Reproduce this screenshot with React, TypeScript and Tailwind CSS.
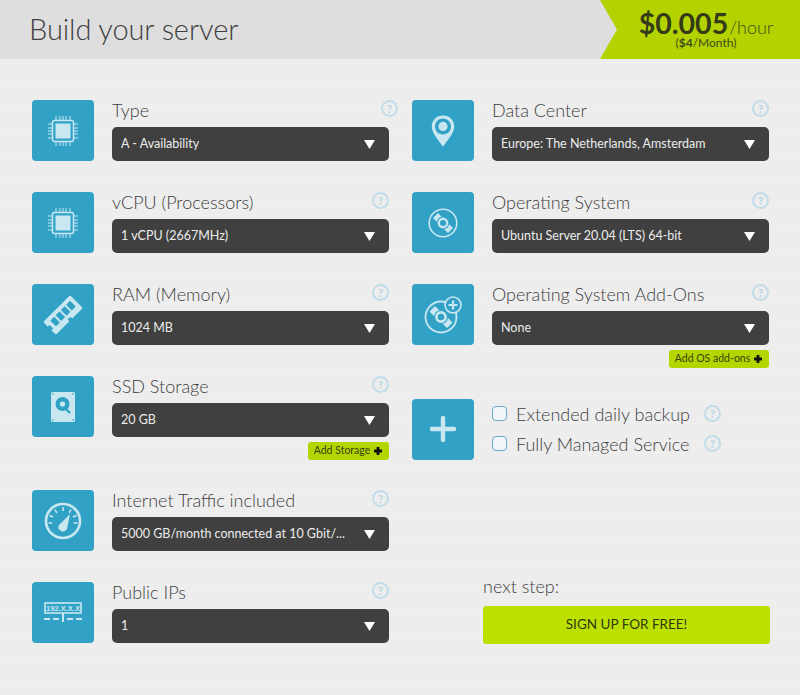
import type { ReactNode } from 'react'

const ink = '#c9e7f1'
const teal = '#31a2c6'

const ChipIcon = () => (
  <svg width="32" height="32" viewBox="0 0 32 32" fill="none" stroke={ink}>
    <rect x="5.5" y="5.5" width="21" height="21" rx="2" strokeWidth="1.5" />
    <rect x="8.5" y="8.5" width="15" height="15" fill={ink} stroke="none" />
    <path
      d="M9 1v4M13 1v4M16 1v4M19 1v4M23 1v4M9 27v4M13 27v4M16 27v4M19 27v4M23 27v4M1 9h4M1 13h4M1 16h4M1 19h4M1 23h4M27 9h4M27 13h4M27 16h4M27 19h4M27 23h4"
      strokeWidth="1"
    />
  </svg>
)

const PinIcon = () => (
  <svg width="24" height="32" viewBox="0 0 24 32">
    <path
      fillRule="evenodd"
      fill={ink}
      d="M12 0.5C5.4 0.5 0.8 5.4 0.8 11.4c0 6.8 7.4 14.6 11.2 20.1 3.8-5.5 11.2-13.3 11.2-20.1C23.2 5.4 18.6 0.5 12 0.5zM12 3.4c4.4 0 8 3.6 8 8s-3.6 8-8 8-8-3.6-8-8 3.6-8 8-8z"
    />
    <circle cx="12" cy="11.4" r="4.6" fill={ink} />
  </svg>
)

const DiscIcon = () => (
  <svg width="30" height="30" viewBox="0 0 30 30" fill="none">
    <circle cx="15" cy="15" r="13.8" stroke={ink} strokeWidth="1.6" />
    <path d="M5 10l5-5 5 5-5 5zM25 20l-5 5-5-5 5-5z" fill={ink} />
    <circle cx="15" cy="15" r="6.4" fill={teal} />
    <circle cx="15" cy="15" r="4.2" stroke={ink} strokeWidth="2.4" />
  </svg>
)

const DiscPlusIcon = () => (
  <svg width="38" height="38" viewBox="0 0 38 38" fill="none">
    <circle cx="17" cy="21" r="15.5" stroke={ink} strokeWidth="1.8" />
    <path d="M5.500 15.500l5.500-5.500 6 6-5.500 5.500zM28.500 26.500l-5.500 5.500-6-6 5.500-5.500z" fill={ink} />
    <circle cx="17" cy="21" r="7" fill={teal} />
    <circle cx="17" cy="21" r="4.6" stroke={ink} strokeWidth="2.6" />
    <circle cx="29" cy="9" r="8" fill={teal} stroke={ink} strokeWidth="1.6" />
    <path d="M29 4.500v9M24.500 9h9" stroke={ink} strokeWidth="2.2" />
  </svg>
)

const RamIcon = () => (
  <svg width="38" height="38" viewBox="0 0 38 38">
    <g transform="rotate(-45 19 19)">
      <path
        fillRule="evenodd"
        fill={ink}
        d="M0 10h38v18H23v-2.500h-4V28H0v-6.500h2.500v-5H0zM6 14v8h5.500v-8zM13.500 14v8h5.500v-8zM21 14v8h5.500v-8zM28.500 14v8h5.500v-8z"
      />
    </g>
  </svg>
)

const DiskIcon = () => (
  <svg width="24" height="30" viewBox="0 0 24 30">
    <rect width="24" height="30" rx="1.5" fill={ink} />
    <circle cx="11.5" cy="12" r="7" fill={teal} />
    <circle cx="11.5" cy="12" r="2.6" fill={ink} />
    <path d="M13 15l6 6" stroke={teal} strokeWidth="2.4" />
    <circle cx="2" cy="2" r="0.8" fill={teal} />
    <circle cx="22" cy="2" r="0.8" fill={teal} />
    <circle cx="2" cy="28" r="0.8" fill={teal} />
    <circle cx="22" cy="28" r="0.8" fill={teal} />
  </svg>
)

const GaugeIcon = () => (
  <svg width="38" height="38" viewBox="0 0 38 38" fill="none">
    <circle cx="19" cy="19" r="17" stroke={ink} strokeWidth="2.6" />
    <path
      d="M19 5v4M11 7.500l1.800 3.400M27 7.500l-1.800 3.400M5.500 13.500l3.600 1.600M32.500 13.500l-3.600 1.600M4.500 21h3.800M33.500 21h-3.800"
      stroke={ink}
      strokeWidth="1.6"
    />
    <path d="M26 12l-3 15a4.600 4.600 0 0 1-8.400-3.600z" fill={ink} />
  </svg>
)

const IpIcon = () => (
  <svg width="38" height="22" viewBox="0 0 38 22" fill="none">
    <rect x="1" y="1" width="36" height="10" stroke={ink} strokeWidth="1.6" />
    <text x="19" y="9" textAnchor="middle" fontSize="7.5" fontWeight="700" fill={ink} fontFamily="'Liberation Sans', sans-serif">
      192.X.X.X
    </text>
    <path d="M19 11v9M0 17h6M9 17h6M23 17h6M32 17h6" stroke={ink} strokeWidth="2" />
  </svg>
)

const PlusIcon = () => (
  <svg width="26" height="26" viewBox="0 0 26 26">
    <path d="M13 2v22M2 13h22" stroke={ink} strokeWidth="4.4" strokeLinecap="round" />
  </svg>
)

const IconBox = ({ children }: { children: ReactNode }) => (
  <div className="flex h-[61px] w-[62px] shrink-0 items-center justify-center rounded-[4px] bg-[#31a2c6]">{children}</div>
)

const Help = ({ className = '' }: { className?: string }) => (
  <span
    className={`flex h-[17px] w-[17px] shrink-0 items-center justify-center rounded-full border-2 border-[#c2dcea] text-[11px] font-bold leading-none text-[#b4d5e6] ${className}`}
  >
    ?
  </span>
)

const Select = ({ value }: { value: string }) => (
  <div className="flex h-[34px] items-center justify-between rounded-[5px] bg-[#404040] pl-[9px] pr-[14px] pt-[1px] text-[12.5px] text-[#ececec]">
    <span className="truncate">{value}</span>
    <svg width="11" height="9" viewBox="0 0 11 9" className="shrink-0">
      <path d="M0 0h11L5.500 9z" fill="#fff" />
    </svg>
  </div>
)

const AddButton = ({ label, width }: { label: string; width: string }) => (
  <div className="mt-[5px] flex justify-end">
    <div className={`flex h-[18px] items-center justify-center gap-[3px] rounded-[3px] bg-[#b4d600] text-[10.5px] text-[#3a3f14] ${width}`}>
      {label}
      <svg width="10" height="10" viewBox="0 0 10 10">
        <path d="M5 1v8M1 5h8" stroke="#111" strokeWidth="2.8" />
      </svg>
    </div>
  </div>
)

type FieldProps = {
  icon: ReactNode
  label: string
  value: string
  helpClass?: string
  spacing: string
  children?: ReactNode
}

const Field = ({ icon, label, value, helpClass, spacing, children }: FieldProps) => (
  <div className={`flex gap-[18px] ${spacing}`}>
    <IconBox>{icon}</IconBox>
    <div className="min-w-0 flex-1">
      <div className="flex h-[26.5px] items-start justify-between">
        <span className="text-[18px] font-light leading-[20px] text-[#3f3f3f]">{label}</span>
        <Help className={helpClass} />
      </div>
      <Select value={value} />
      {children}
    </div>
  </div>
)

const CheckRow = ({ label }: { label: string }) => (
  <div className="flex items-center">
    <span className="h-[15px] w-[15px] shrink-0 rounded-[4px] border border-[#6aa9c9] bg-[#f3f6f8]" />
    <span className="ml-[9px] w-[188px] whitespace-nowrap text-[18px] font-light leading-[30px] text-[#3f3f3f]">{label}</span>
    <Help />
  </div>
)

export default function App() {
  return (
    <div className="h-[695px] w-[800px] overflow-hidden bg-[#eeeeee] bg-[repeating-linear-gradient(0deg,rgba(0,0,0,0.008)_0px,rgba(0,0,0,0.008)_1px,transparent_1px,transparent_3px)] font-['Lato',sans-serif]">
      <header className="flex h-[59px] items-stretch justify-between bg-[#dedede]">
        <h1 className="pl-[29px] pt-[9px] text-[29px] font-light leading-[40px] tracking-[-0.1px] text-[#3f3f3f]">Build your server</h1>
        <div className="flex w-[200px] flex-col items-center bg-[#b4d200] pl-[12px] pt-[10px] text-[#3f4a1c] [clip-path:polygon(0_0,100%_0,100%_100%,0_100%,17px_50%)]">
          <div className="flex h-[26px] items-baseline leading-[26px]">
            <span className="text-[28.5px] font-bold text-[#333b18]">$0.005</span>
            <span className="ml-[1px] text-[18px] font-light">/hour</span>
          </div>
          <div className="text-[12px] leading-[14px]">
            (<b>$4</b>/Month)
          </div>
        </div>
      </header>

      <main className="grid grid-cols-[357px_357px] gap-x-[23px] pl-[32px] pt-[41px]">
        <section>
          <Field icon={<ChipIcon />} label="Type" value="A - Availability" helpClass="-mr-[9px]" spacing="mb-[31px]" />
          <Field icon={<ChipIcon />} label="vCPU (Processors)" value="1 vCPU (2667MHz)" spacing="mb-[31px]" />
          <Field icon={<RamIcon />} label="RAM (Memory)" value="1024 MB" spacing="mb-[31px]" />
          <Field icon={<DiskIcon />} label="SSD Storage" value="20 GB" spacing="mb-[30.5px]">
            <AddButton label="Add Storage" width="w-[81px]" />
          </Field>
          <Field
            icon={<GaugeIcon />}
            label="Internet Traffic included"
            value="5000 GB/month connected at 10 Gbit/..."
            spacing="mb-[31px]"
          />
          <Field icon={<IpIcon />} label="Public IPs" value="1" spacing="" />
        </section>

        <section>
          <Field icon={<PinIcon />} label="Data Center" value="Europe: The Netherlands, Amsterdam" spacing="mb-[31px]" />
          <Field icon={<DiscIcon />} label="Operating System" value="Ubuntu Server 20.04 (LTS) 64-bit" spacing="mb-[31px]" />
          <Field icon={<DiscPlusIcon />} label="Operating System Add-Ons" value="None" spacing="mb-[31px]">
            <AddButton label="Add OS add-ons" width="w-[100px]" />
          </Field>
          <div className="flex gap-[18px]">
            <IconBox>
              <PlusIcon />
            </IconBox>
            <div>
              <CheckRow label="Extended daily backup" />
              <CheckRow label="Fully Managed Service" />
            </div>
          </div>
          <div className="ml-[71px] mt-[114px]">
            <div className="text-[18px] font-light leading-[24px] text-[#3f3f3f]">next step:</div>
            <div className="mt-[8px] flex h-[38px] w-[287px] items-center justify-center rounded-[3px] bg-[#bce000] text-[13.5px] text-[#2f3a10]">
              SIGN UP FOR FREE!
            </div>
          </div>
        </section>
      </main>
    </div>
  )
}
